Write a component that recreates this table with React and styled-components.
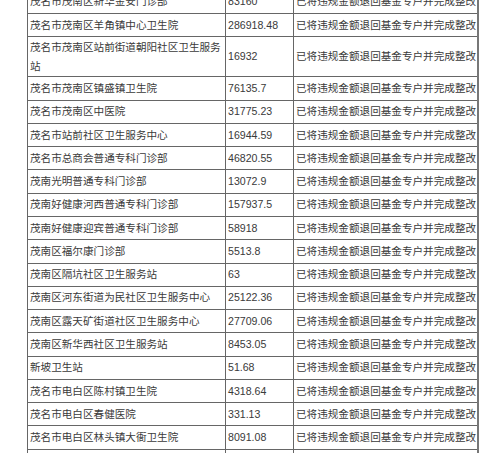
import React from 'react'
import styled, { createGlobalStyle } from 'styled-components'

const Global = createGlobalStyle`
  html, body {
    margin: 0;
    padding: 0;
    background: #fff;
    overflow: hidden;
  }
`

const Page = styled.div`
  width: 500px;
  height: 453px;
  overflow: hidden;
  background: #fff;
`

// the sheet is cropped: the first row is only half visible
const Table = styled.table`
  width: 450px;
  margin-left: 27px;
  margin-top: -10.3px;
  border-collapse: collapse;
  table-layout: fixed;
  background-color: #fff;
  border-right: 2px solid #777;
  font-family: "Liberation Sans", "Noto Sans CJK SC", sans-serif;
  font-size: 10.6px;
  color: #3a3a3a;
`

const Col = styled.col`
  width: ${p => p.$w}px;
`

const Td = styled.td`
  height: ${p => (p.$tall ? '39.2px' : '22.27px')};
  padding: 0 0 0 2px;
  line-height: 19px;
  text-align: left;
  vertical-align: middle;
  border: 1px solid #666;
  overflow: hidden;
  white-space: ${p => (p.$wrap ? 'normal' : 'nowrap')};
  word-break: break-all;
`

const rows = [
  ['茂名市茂南区新华金安门诊部', '83160'],
  ['茂名市茂南区羊角镇中心卫生院', '286918.48'],
  ['茂名市茂南区站前街道朝阳社区卫生服务站', '16932', true],
  ['茂名市茂南区镇盛镇卫生院', '76135.7'],
  ['茂名市茂南区中医院', '31775.23'],
  ['茂名市站前社区卫生服务中心', '16944.59'],
  ['茂名市总商会普通专科门诊部', '46820.55'],
  ['茂南光明普通专科门诊部', '13072.9'],
  ['茂南好健康河西普通专科门诊部', '157937.5'],
  ['茂南好健康迎宾普通专科门诊部', '58918'],
  ['茂南区福尔康门诊部', '5513.8'],
  ['茂南区隔坑社区卫生服务站', '63'],
  ['茂南区河东街道为民社区卫生服务中心', '25122.36'],
  ['茂南区露天矿街道社区卫生服务中心', '27709.06'],
  ['茂南区新华西社区卫生服务站', '8453.05'],
  ['新坡卫生站', '51.68'],
  ['茂名市电白区陈村镇卫生院', '4318.64'],
  ['茂名市电白区春健医院', '331.13'],
  ['茂名市电白区林头镇大衙卫生院', '8091.08'],
  ['', ''],
]

const status = '已将违规金额退回基金专户并完成整改'

export default function App() {
  return (
    <Page>
      <Global />
      <Table>
        <colgroup>
          <Col $w={198} />
          <Col $w={68} />
          <Col $w={184} />
        </colgroup>
        <tbody>
          {rows.map(([name, amount, tall], i) => (
            <tr key={i}>
              <Td $tall={tall} $wrap={tall}>{name}</Td>
              <Td $tall={tall}>{amount}</Td>
              <Td $tall={tall}>{name ? status : ''}</Td>
            </tr>
          ))}
        </tbody>
      </Table>
    </Page>
  )
}
